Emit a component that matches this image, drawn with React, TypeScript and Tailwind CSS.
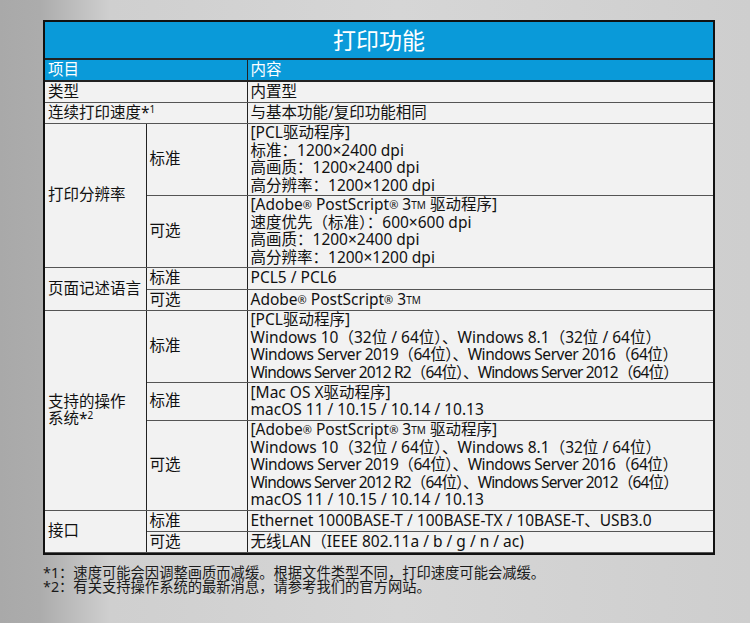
import React from 'react';

const font = "font-['Noto_Sans','Noto_Sans_CJK_SC',sans-serif]";

type Row = {
  main?: { text: React.ReactNode; span: number };
  sub?: string;
  full?: React.ReactNode;
  lines: React.ReactNode[];
  h: number;
};

const R = () => <sup className="text-[11px] relative -top-[1px]">®</sup>;
const TM = () => <sup className="text-[10px] relative -top-[1px]">TM</sup>;

const winLines = [
  'Windows 10（32位 / 64位）、Windows 8.1（32位 / 64位）',
  <span className="tracking-[-0.45px]">Windows Server 2019（64位）、Windows Server 2016（64位）</span>,
  <span className="tracking-[-0.85px]">Windows Server 2012 R2（64位）、Windows Server 2012（64位）</span>,
];

const rows: Row[] = [
  { full: '类型', lines: ['内置型'], h: 21 },
  {
    full: (
      <>
        连续打印速度*<sup className="text-[10px]">1</sup>
      </>
    ),
    lines: ['与基本功能/复印功能相同'],
    h: 21,
  },
  {
    main: { text: '打印分辨率', span: 2 },
    sub: '标准',
    lines: ['[PCL驱动程序]', '标准：1200×2400 dpi', '高画质：1200×2400 dpi', '高分辨率：1200×1200 dpi'],
    h: 72,
  },
  {
    sub: '可选',
    lines: [
      <>[Adobe<R /> PostScript<R /> 3<TM /> 驱动程序]</>,
      '速度优先（标准）：600×600 dpi',
      '高画质：1200×2400 dpi',
      '高分辨率：1200×1200 dpi',
    ],
    h: 72,
  },
  { main: { text: '页面记述语言', span: 2 }, sub: '标准', lines: ['PCL5 / PCL6'], h: 22 },
  { sub: '可选', lines: [<>Adobe<R /> PostScript<R /> 3<TM /></>], h: 21 },
  {
    main: {
      text: (
        <>
          支持的操作
          <br />
          系统*<sup className="text-[10px]">2</sup>
        </>
      ),
      span: 3,
    },
    sub: '标准',
    lines: ['[PCL驱动程序]', ...winLines],
    h: 72,
  },
  { sub: '标准', lines: ['[Mac OS X驱动程序]', 'macOS 11 / 10.15 / 10.14 / 10.13'], h: 38 },
  {
    sub: '可选',
    lines: [
      <>[Adobe<R /> PostScript<R /> 3<TM /> 驱动程序]</>,
      ...winLines,
      'macOS 11 / 10.15 / 10.14 / 10.13',
    ],
    h: 90,
  },
  {
    main: { text: '接口', span: 2 },
    sub: '标准',
    lines: ['Ethernet 1000BASE-T / 100BASE-TX / 10BASE-T、USB3.0'],
    h: 21,
  },
  { sub: '可选', lines: ['无线LAN（IEEE 802.11a / b / g / n / ac)'], h: 21 },
];

const cell = 'border-r border-b border-[#555] px-[3px] align-middle leading-[17.5px] whitespace-nowrap';

export default function App() {
  return (
    <div
      className={`${font} w-[750px] h-[623px] overflow-hidden bg-[linear-gradient(to_right,#a9a9a9_0px,#acacac_40px,#cfcfcf_110px,#d6d6d6_400px,#cecece_750px)] text-[#111]`}
    >
      <div className="pt-[20px] pl-[43px]">
        <div className="w-[672px] border-2 border-[#111] bg-[#f2f2f2]">
          <div className="h-[38px] bg-[#0a9ad9] border-b-2 border-[#222] flex items-center justify-center text-white text-[23px]">
            打印功能
          </div>
          <table className="table-fixed border-collapse w-full text-[15.5px]">
            <colgroup>
              <col className="w-[101px]" />
              <col className="w-[101px]" />
              <col />
            </colgroup>
            <tbody>
              <tr className="h-[21px] bg-[#0a9ad9] text-white">
                <td colSpan={2} className="border-r border-b-2 border-[#222] px-[3px] leading-[17.5px]">
                  项目
                </td>
                <td className="border-b-2 border-[#222] px-[3px] leading-[17.5px]">内容</td>
              </tr>
              {rows.map((r, i) => (
                <tr key={i} style={{ height: r.h }}>
                  {r.full && (
                    <td colSpan={2} className={`${cell} border-r-[#222]`}>
                      {r.full}
                    </td>
                  )}
                  {r.main && (
                    <td rowSpan={r.main.span} className={`${cell} border-r-[#222]`}>
                      {r.main.text}
                    </td>
                  )}
                  {r.sub && <td className={`${cell} border-r-[#222]`}>{r.sub}</td>}
                  <td className={`${cell} border-r-0`}>
                    {r.lines.map((l, j) => (
                      <div key={j}>{l}</div>
                    ))}
                  </td>
                </tr>
              ))}
            </tbody>
          </table>
        </div>
        <div className="mt-[11px] text-[14.3px] leading-[14px] text-[#1a1a1a]">
          <div>*1：速度可能会因调整画质而减缓。根据文件类型不同，打印速度可能会减缓。</div>
          <div>*2：有关支持操作系统的最新消息，请参考我们的官方网站。</div>
        </div>
      </div>
    </div>
  );
}
